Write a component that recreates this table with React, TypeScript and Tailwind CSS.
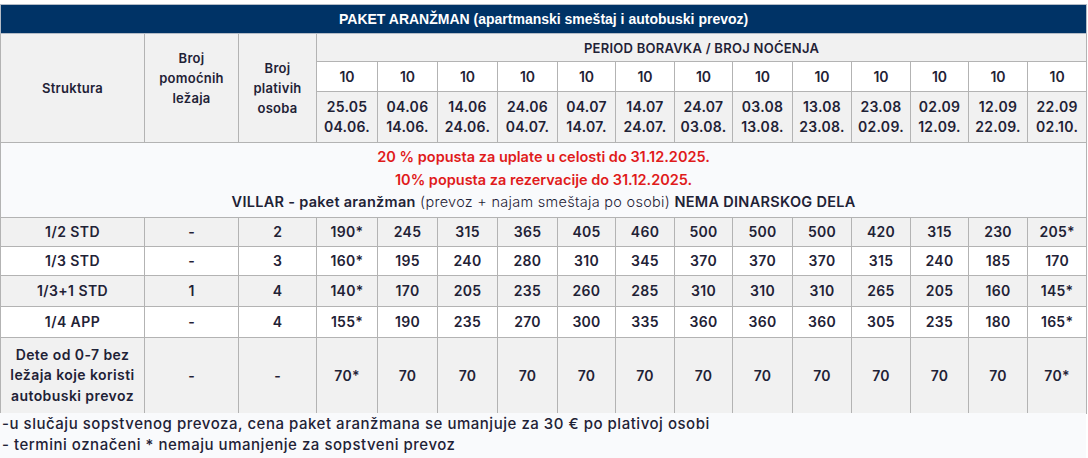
import React from "react";

const dates: [string, string][] = [
  ["25.05", "04.06."],
  ["04.06", "14.06."],
  ["14.06", "24.06."],
  ["24.06", "04.07."],
  ["04.07", "14.07."],
  ["14.07", "24.07."],
  ["24.07", "03.08."],
  ["03.08", "13.08."],
  ["13.08", "23.08."],
  ["23.08", "02.09."],
  ["02.09", "12.09."],
  ["12.09", "22.09."],
  ["22.09", "02.10."],
];

const colW = [61, 60, 60, 60, 58, 59, 58, 60, 59, 59, 58, 59, 59];

type Row = { s: React.ReactNode; a: string; b: string; v: string[]; gray: boolean; h: string };

const rows: Row[] = [
  { s: "1/2 STD", a: "-", b: "2", v: ["190*", "245", "315", "365", "405", "460", "500", "500", "500", "420", "315", "230", "205*"], gray: true, h: "h-[29px]" },
  { s: "1/3 STD", a: "-", b: "3", v: ["160*", "195", "240", "280", "310", "345", "370", "370", "370", "315", "240", "185", "170"], gray: false, h: "h-[29px]" },
  { s: "1/3+1 STD", a: "1", b: "4", v: ["140*", "170", "205", "235", "260", "285", "310", "310", "310", "265", "205", "160", "145*"], gray: true, h: "h-[31px]" },
  { s: "1/4 APP", a: "-", b: "4", v: ["155*", "190", "235", "270", "300", "335", "360", "360", "360", "305", "235", "180", "165*"], gray: false, h: "h-[31px]" },
  {
    s: (
      <>
        Dete od 0-7 bez
        <br />
        ležaja koje koristi
        <br />
        autobuski prevoz
      </>
    ),
    a: "-",
    b: "-",
    v: ["70*", "70", "70", "70", "70", "70", "70", "70", "70", "70", "70", "70", "70*"],
    gray: true,
    h: "h-[76px]",
  },
];

export default function App() {
  return (
    <div
      className="w-[1088px] h-[458px] bg-white pt-[4px] text-[#1f2236] overflow-hidden"
      style={{ fontFamily: "Inter, 'DejaVu Sans', sans-serif" }}
    >
      <table className="table-fixed border-collapse w-[1086px]">
        <colgroup>
          <col style={{ width: 144 }} />
          <col style={{ width: 94 }} />
          <col style={{ width: 78 }} />
          {colW.map((w, i) => (
            <col key={i} style={{ width: w }} />
          ))}
        </colgroup>
        <tbody>
          <tr>
            <td
              colSpan={16}
              className="bg-[#003366] border border-[#b4bcc7] h-[29px] text-center text-white font-bold text-[14px] leading-[28px] p-0"
              style={{ fontFamily: "'Liberation Sans', Arial, sans-serif" }}
            >
              PAKET ARANŽMAN (apartmanski smeštaj i autobuski prevoz)
            </td>
          </tr>
          <tr>
            <td rowSpan={3} className="bg-[#f1f1f1] border border-[#b3b3b3] text-center font-semibold text-[13px] leading-5 tracking-[0.02em]">
              Struktura
            </td>
            <td rowSpan={3} className="bg-[#f1f1f1] border border-[#b3b3b3] text-center font-semibold text-[13px] leading-5 tracking-[0.02em]">
              Broj
              <br />
              pomoćnih
              <br />
              ležaja
              <br />
              &nbsp;
            </td>
            <td rowSpan={3} className="bg-[#f1f1f1] border border-[#b3b3b3] text-center font-semibold text-[13px] leading-5 tracking-[0.02em]">
              Broj
              <br />
              plativih
              <br />
              osoba
            </td>
            <td colSpan={13} className="bg-[#f1f1f1] border border-[#b3b3b3] text-center font-semibold text-[13px] h-[28px] leading-5 p-0 tracking-[0.02em]">
              PERIOD BORAVKA / BROJ NOĆENJA
            </td>
          </tr>
          <tr>
            {dates.map((_, i) => (
              <td key={i} className="bg-white border border-[#b3b3b3] text-center font-semibold text-[14px] h-[30px] leading-5 p-0">
                10
              </td>
            ))}
          </tr>
          <tr>
            {dates.map((d, i) => (
              <td key={i} className="bg-[#f1f1f1] border border-[#b3b3b3] text-center font-semibold text-[14px] h-[51px] leading-5 p-0 tracking-[0.02em]">
                {d[0]}
                <br />
                {d[1]}
              </td>
            ))}
          </tr>
          <tr>
            <td colSpan={16} className="bg-[#f9fafc] border border-[#b3b3b3] text-center h-[75px] p-0 pt-[1px] text-[14.5px] tracking-[0.02em]">
              <div className="text-[#e01b1b] font-semibold text-[14.5px] tracking-normal leading-[23px]">20 % popusta za uplate u celosti do 31.12.2025.</div>
              <div className="text-[#e01b1b] font-semibold text-[14.5px] tracking-normal leading-[23px]">10% popusta za rezervacije do 31.12.2025.</div>
              <div className="leading-[22px] pb-[4px]">
                <span className="font-semibold">VILLAR - paket aranžman</span>
                <span className="font-light"> (prevoz + najam smeštaja po osobi) </span>
                <span className="font-semibold">NEMA DINARSKOG DELA</span>
              </div>
            </td>
          </tr>
          {rows.map((r, ri) => {
            const bg = r.gray ? "bg-[#f1f1f1]" : "bg-white";
            return (
              <tr key={ri} className={bg}>
                <td className={`border border-[#b3b3b3] text-center font-semibold text-[14px] leading-[20.5px] tracking-[0.03em] p-0 ${r.h}`}>{r.s}</td>
                <td className="border border-[#b3b3b3] text-center font-semibold text-[14px] leading-5 p-0">{r.a}</td>
                <td className="border border-[#b3b3b3] text-center font-semibold text-[14px] leading-5 p-0">{r.b}</td>
                {r.v.map((v, i) => (
                  <td key={i} className="border border-[#b3b3b3] text-center font-semibold text-[14px] leading-5 p-0 tracking-[0.02em]">
                    {v}
                  </td>
                ))}
              </tr>
            );
          })}
        </tbody>
      </table>
      <div className="bg-[#f9fafc] h-[60px] w-[1086px] px-[2px] text-[15px] font-medium leading-[21px] tracking-[0.035em] -mt-[1px]">
        <div>-u slučaju sopstvenog prevoza, cena paket aranžmana se umanjuje za 30 € po plativoj osobi</div>
        <div>- termini označeni * nemaju umanjenje za sopstveni prevoz</div>
      </div>
    </div>
  );
}
